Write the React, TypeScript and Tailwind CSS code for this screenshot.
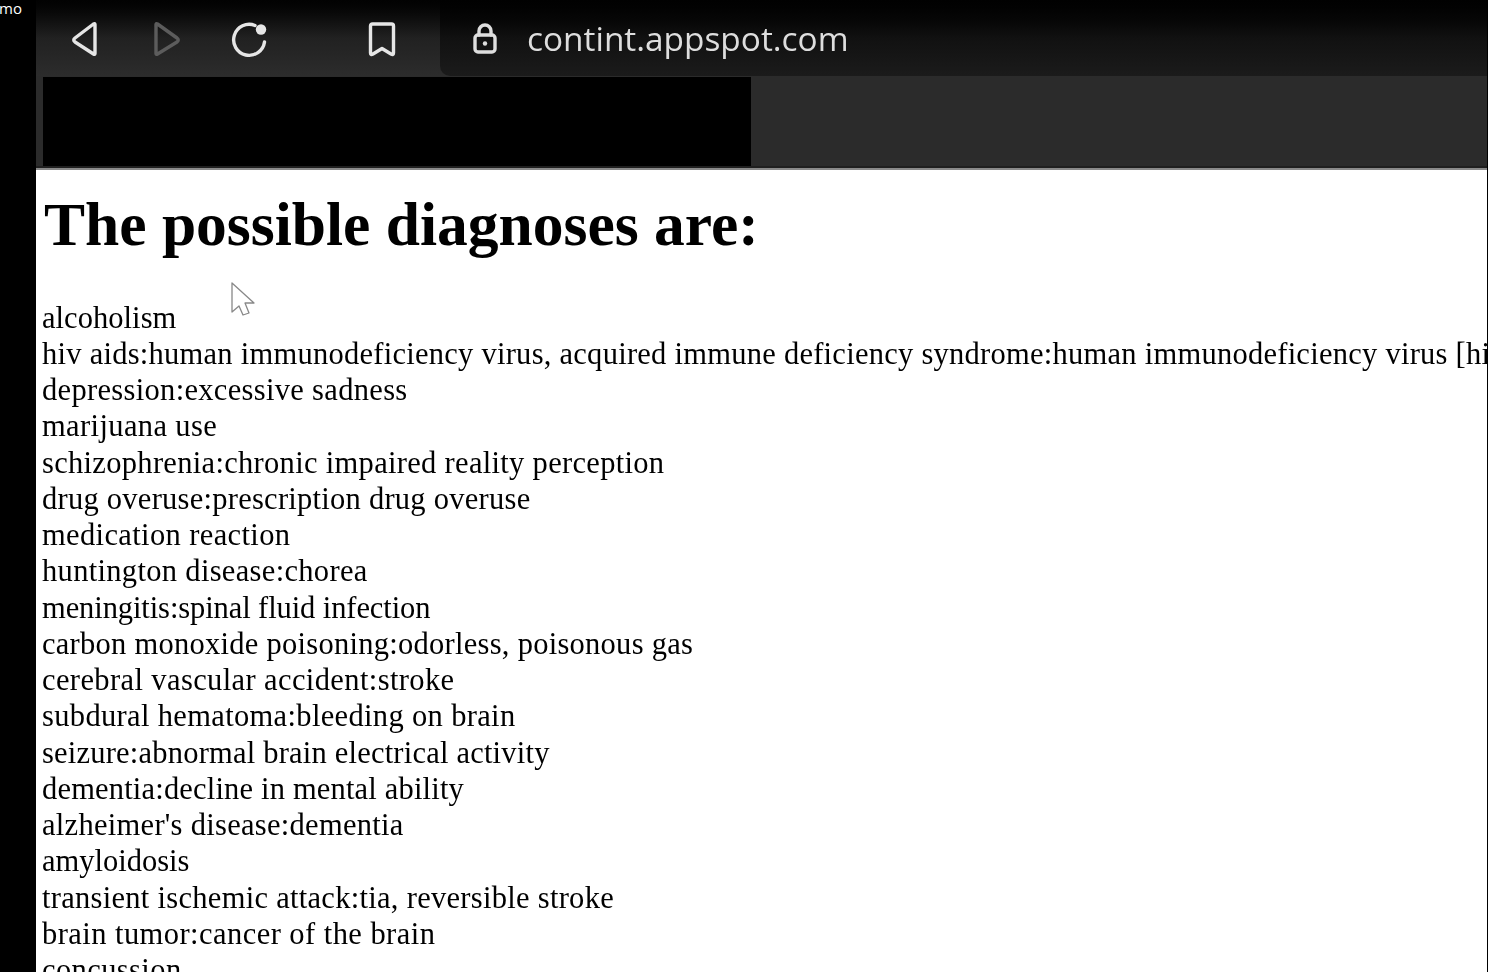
import React from "react";

const items: [string, string][] = [
  ["alcoholism", "tracking-[0.05px]"],
  ["hiv aids:human immunodeficiency virus, acquired immune deficiency syndrome:human immunodeficiency virus [hiv] infection", "tracking-[0.26px]"],
  ["depression:excessive sadness", "tracking-[0.32px]"],
  ["marijuana use", "tracking-[0.38px]"],
  ["schizophrenia:chronic impaired reality perception", "tracking-[0.31px]"],
  ["drug overuse:prescription drug overuse", "tracking-[0.26px]"],
  ["medication reaction", "tracking-[0.37px]"],
  ["huntington disease:chorea", "tracking-[0.32px]"],
  ["meningitis:spinal fluid infection", "tracking-[-0.09px]"],
  ["carbon monoxide poisoning:odorless, poisonous gas", "tracking-[0.27px]"],
  ["cerebral vascular accident:stroke", "tracking-[0.39px]"],
  ["subdural hematoma:bleeding on brain", "tracking-[0.34px]"],
  ["seizure:abnormal brain electrical activity", "tracking-[0.21px]"],
  ["dementia:decline in mental ability", "tracking-[0.18px]"],
  ["alzheimer's disease:dementia", "tracking-[0.29px]"],
  ["amyloidosis", "tracking-[0px]"],
  ["transient ischemic attack:tia, reversible stroke", "tracking-[0.29px]"],
  ["brain tumor:cancer of the brain", "tracking-[0.45px]"],
  ["concussion", "tracking-[0.4px]"],
];

function Icon({ children, className }: { children: React.ReactNode; className: string }) {
  return (
    <svg viewBox="0 0 40 40" fill="none" stroke="currentColor" strokeWidth="3.4" strokeLinejoin="round" strokeLinecap="round" className={className}>
      {children}
    </svg>
  );
}

export default function App() {
  return (
    <div className="flex h-[972px] w-[1488px] overflow-hidden bg-black pr-px">
      <div className="w-9 shrink-0 overflow-hidden text-[15px] leading-[16px] text-white font-['Open_Sans',sans-serif]">
        <div className="-ml-[1px]">mo</div>
      </div>
      <div className="flex min-w-0 flex-1 flex-col overflow-hidden">
        <div className="flex h-[76px] shrink-0 bg-gradient-to-b from-[#020202] via-[#212121] via-50% to-[#2c2c2c]">
          <div className="flex w-[404px] shrink-0 items-center pt-[2px] text-[#e6e6e6] blur-[0.6px]">
            <Icon className="ml-[28px] h-10 w-10">
              <path d="M31 5.5 V34.5 Q31 36 29.5 35 L11 23 Q8.5 21 11 19 L29.5 5 Q31 4 31 5.5 Z" />
            </Icon>
            <Icon className="ml-[43px] h-10 w-10 text-[#5c5c5c]">
              <path d="M9 5.5 V34.5 Q9 36 10.5 35 L30 23 Q32.5 21 30 19 L10.5 5 Q9 4 9 5.5 Z" />
            </Icon>
            <Icon className="ml-[43px] h-10 w-10">
              <path d="M34.5 23 A15.5 15.5 0 1 1 25 6.5" />
              <circle cx="31" cy="10.5" r="5.2" fill="currentColor" stroke="none" />
            </Icon>
            <Icon className="ml-[92px] h-10 w-10">
              <path d="M8.5 7 Q8.5 5 10.5 5 H29.5 Q31.5 5 31.5 7 V34 Q31.5 36.5 29 35 L20 29.5 L11 35 Q8.5 36.5 8.5 34 Z" />
            </Icon>
          </div>
          <div className="flex min-w-0 flex-1 items-center rounded-bl-[10px] bg-gradient-to-b from-[#010101] via-[#111111] to-[#1b1b1b] pt-[2px] text-[#dedede]">
            <Icon className="ml-[25px] h-10 w-10 shrink-0 blur-[0.6px]">
              <rect x="10" y="16" width="20" height="17" rx="3" />
              <path d="M14 16 V12 A6 6 0 0 1 26 12 V16" />
              <circle cx="20" cy="24.5" r="2.2" fill="currentColor" stroke="none" />
            </Icon>
            <span className="ml-[22px] text-[33.4px] leading-none font-['Open_Sans',sans-serif] font-normal blur-[0.5px]">contint.appspot.com</span>
          </div>
        </div>
        <div className="flex h-[92px] shrink-0 items-start border-b-2 border-[#1f1f1f] bg-[#2b2b2b] pl-[7px] pt-px">
          <div className="h-[89px] w-[708px] bg-black" />
        </div>
        <div className="h-[2px] shrink-0 bg-[#8a8a8a]" />
        <div className="relative min-h-0 flex-1 overflow-hidden bg-white pl-[6px] font-['Liberation_Serif',serif] text-black">
          <h1 className="ml-[2px] mt-[18px] text-[61.5px] leading-[72px] font-bold whitespace-nowrap blur-[0.6px]">The possible diagnoses are:</h1>
          <div className="mt-[39.6px] text-[30.5px] leading-[36.25px] whitespace-nowrap blur-[0.6px]">
            {items.map(([t, c]) => (
              <div key={t} className={c}>{t}</div>
            ))}
          </div>
          <svg viewBox="0 0 24 36" className="absolute left-[195px] top-[112px] h-[36px] w-[24px]" fill="white" stroke="#888" strokeWidth="1.3" strokeLinejoin="round">
            <path d="M1 1 V30 L8 24 L12 33 L18 31 L14 21 H23 Z" />
          </svg>
        </div>
      </div>
    </div>
  );
}
